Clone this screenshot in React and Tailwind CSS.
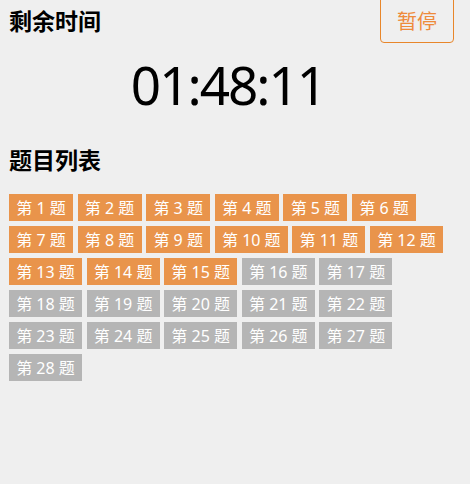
import React from "react";

const done = 15;
const items = Array.from({ length: 28 }, (_, i) => i + 1);

export default function App() {
  return (
    <div
      className="min-h-[484px] w-[470px] bg-[#efefef] pl-[9px] pr-[16px]"
      style={{ fontFamily: '"Noto Sans", "Noto Sans CJK SC", sans-serif' }}
    >
      <div className="flex items-start justify-between">
        <h2 className="mt-[5px] text-[23px] font-bold leading-[32px] text-black">剩余时间</h2>
        <button className="mt-[-8px] h-[51px] w-[74px] rounded-[4px] border border-[#e8862a] text-[20px] leading-none text-[#ee8a3a] pt-[8px]">
          暂停
        </button>
      </div>
      <div className="mt-[12px] pr-[7px] text-center text-[53px] leading-[60px] tracking-[-2px] text-black">01:48:11</div>
      <h2 className="mt-[29px] text-[23px] font-bold leading-[32px] text-black">题目列表</h2>
      <div className="mt-[18px] flex flex-wrap gap-x-[4.6px] gap-y-[5px]">
        {items.map((n) => (
          <div
            key={n}
            className={
              (n <= done ? "bg-[#e9944b] " : "bg-[#b5b5b5] ") +
              (n < 10 ? "w-[64px] " : "w-[73px] ") +
              "flex h-[27px] items-center justify-center text-[16px] text-white"
            }
          >
            第 {n} 题
          </div>
        ))}
      </div>
    </div>
  );
}
